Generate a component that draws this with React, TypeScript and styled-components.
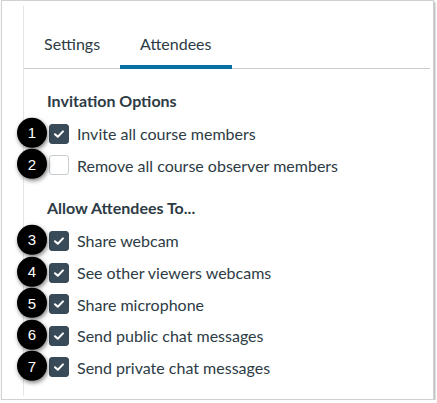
import styled, { createGlobalStyle } from 'styled-components';

const GlobalStyle = createGlobalStyle`
    html, body {
        margin: 0;
        padding: 0;
        background: #ffffff;
    }
    body {
        font-family: Lato, "Liberation Sans", sans-serif;
        color: #2d3b45;
    }
`;

const Frame = styled.div`
    box-sizing: border-box;
    width: 433px;
    height: 400px;
    margin-left: 1px;
    border: 1px solid #cfd1d3;
    box-shadow: 1px 2px 2px rgba(0, 0, 0, 0.35);
    display: flex;
    background: #ffffff;
`;

const Panel = styled.div`
    flex: 1;
    margin: 5px 3px 3px 21px;
    border-left: 1px solid #e4e6e8;
    display: flex;
    flex-direction: column;
`;

const TabBar = styled.div`
    display: flex;
    height: 62px;
    border-bottom: 1px solid #c7cdd1;
`;

const Tab = styled.div<{ $active?: boolean }>`
    box-sizing: border-box;
    height: 63px;
    margin-bottom: -1px;
    padding: 28px 20px 0;
    font-size: 16px;
    line-height: 20px;
    color: #2d3b45;
    border-bottom: 4px solid ${(p) => (p.$active ? '#0770a3' : 'transparent')};
`;

const Content = styled.div`
    padding: 22px 0 0 23px;
    display: flex;
    flex-direction: column;
`;

const Section = styled.div<{ $gap?: number }>`
    display: flex;
    flex-direction: column;
    margin-top: ${(p) => p.$gap ?? 0}px;
`;

const Heading = styled.h3`
    margin: 0 0 7px;
    font-size: 16px;
    line-height: 20px;
    font-weight: 700;
    color: #2d3b45;
`;

const Row = styled.label`
    position: relative;
    display: flex;
    align-items: center;
    gap: 8px;
    height: 31.6px;
    padding-left: 2px;
    font-size: 16px;
    color: #2d3b45;
`;

const Box = styled.span<{ $checked?: boolean }>`
    box-sizing: border-box;
    width: 20px;
    height: 20px;
    border-radius: 3px;
    display: flex;
    align-items: center;
    justify-content: center;
    flex: none;
    background: ${(p) => (p.$checked ? '#394b58' : '#ffffff')};
    border: 1px solid ${(p) => (p.$checked ? '#394b58' : '#c7cdd1')};
`;

const Badge = styled.span`
    position: absolute;
    left: -30px;
    top: 50%;
    transform: translateY(-54%);
    width: 30px;
    height: 30px;
    border-radius: 50%;
    background: #000000;
    color: #ffffff;
    font-family: "Liberation Sans", Arial, sans-serif;
    font-size: 15px;
    display: flex;
    align-items: center;
    justify-content: center;
    box-shadow: 1px 2px 4px rgba(0, 0, 0, 0.5);
    z-index: 1;
`;

const Check = () => (
    <svg width="12" height="10" viewBox="0 0 12 10">
        <path d="M2 5.2 L4.8 7.8 L10 2.4" fill="none" stroke="#ffffff" strokeWidth="2" strokeLinecap="round" strokeLinejoin="round" />
    </svg>
);

type Item = { n: number; label: string; checked: boolean };

const invitation: Item[] = [
    { n: 1, label: 'Invite all course members', checked: true },
    { n: 2, label: 'Remove all course observer members', checked: false },
];

const allow: Item[] = [
    { n: 3, label: 'Share webcam', checked: true },
    { n: 4, label: 'See other viewers webcams', checked: true },
    { n: 5, label: 'Share microphone', checked: true },
    { n: 6, label: 'Send public chat messages', checked: true },
    { n: 7, label: 'Send private chat messages', checked: true },
];

const Option = ({ item }: { item: Item }) => (
    <Row>
        <Badge>{item.n}</Badge>
        <Box $checked={item.checked}>{item.checked ? <Check /> : null}</Box>
        <span>{item.label}</span>
    </Row>
);

export default function App() {
    return (
        <>
            <GlobalStyle />
            <Frame>
                <Panel>
                    <TabBar>
                        <Tab>Settings</Tab>
                        <Tab $active>Attendees</Tab>
                    </TabBar>
                    <Content>
                        <Section>
                            <Heading>Invitation Options</Heading>
                            {invitation.map((item) => (
                                <Option key={item.n} item={item} />
                            ))}
                        </Section>
                        <Section $gap={17}>
                            <Heading>Allow Attendees To...</Heading>
                            {allow.map((item) => (
                                <Option key={item.n} item={item} />
                            ))}
                        </Section>
                    </Content>
                </Panel>
            </Frame>
        </>
    );
}
